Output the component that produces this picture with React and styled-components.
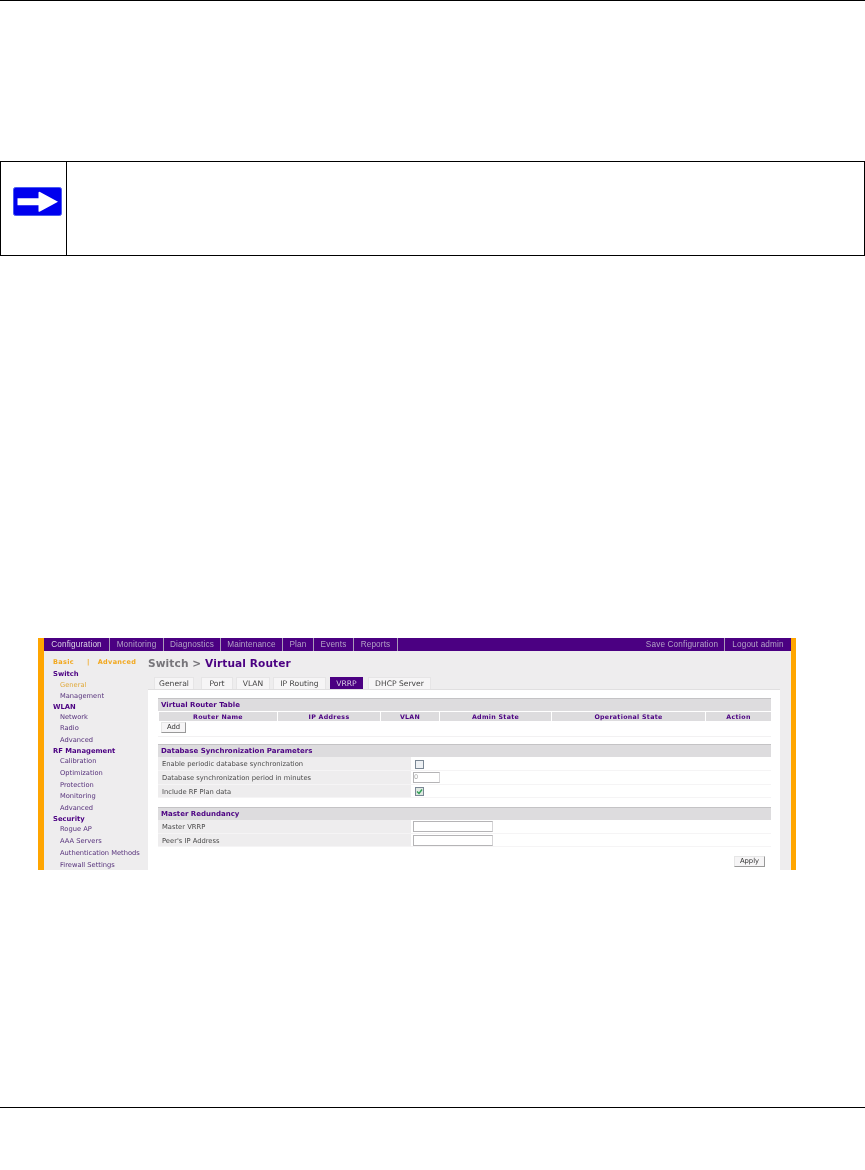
import styled, { createGlobalStyle } from 'styled-components';

const PURPLE = '#4b0082';
const GLOBAL_FONT = '"DejaVu Sans", Verdana, sans-serif';

const Global = createGlobalStyle`
  html, body { margin: 0; padding: 0; background: #fff; }
  body { font-family: ${GLOBAL_FONT}; }
`;

const Page = styled.div`
  width: 865px;
  height: 1170px;
  overflow: hidden;
  display: flex;
  flex-direction: column;
`;

const Rule = styled.div`
  height: 1px;
  background: #000;
  flex: none;
  margin-top: ${({ $mt }) => $mt || 0}px;
`;

const NoteBox = styled.div`
  margin-top: 160px;
  height: 95px;
  box-sizing: border-box;
  border: 1px solid #000;
  display: flex;
  flex: none;
`;

const NoteIcon = styled.div`
  width: 53px;
  border-right: 1px solid #000;
  display: flex;
  padding: 25px 0 0 12px;
`;

const Shot = styled.div`
  margin: 382px 0 0 38px;
  width: 758px;
  height: 232px;
  flex: none;
  box-sizing: border-box;
  border-left: 6px solid #ffa500;
  border-right: 5px solid #ffa500;
  background: #eeedee;
  overflow: hidden;
  font-size: 7.5px;
  display: flex;
  flex-direction: column;
  filter: blur(0.4px);
`;

const Nav = styled.div`
  height: 13px;
  flex: none;
  background: ${PURPLE};
  display: flex;
`;

const NavItem = styled.div`
  width: ${({ $w }) => $w}px;
  flex: none;
  box-sizing: border-box;
  border-right: ${({ $last }) => ($last ? 'none' : '1px solid #a99bb8')};
  color: ${({ $active }) => ($active ? '#dcd4e6' : '#b3a2c6')};
  font-family: "Liberation Sans", Arial, sans-serif;
  font-size: 8.2px;
  letter-spacing: 0.15px;
  line-height: 13px;
  text-align: center;
  white-space: nowrap;
`;

const NavGap = styled.div`
  flex: 1;
`;

const Body = styled.div`
  flex: 1;
  display: flex;
  min-height: 0;
`;

const Side = styled.div`
  width: 104px;
  flex: none;
  padding: 5px 0 0 9px;
  box-sizing: border-box;
`;

const BasicRow = styled.div`
  color: #f2a81f;
  font-weight: bold;
  font-size: 6.5px;
  letter-spacing: 0.35px;
  height: 13px;
  line-height: 12px;
  white-space: pre;
`;

const SideHead = styled.div`
  height: ${({ $h }) => $h}px;
  line-height: ${({ $h }) => $h}px;
  color: ${PURPLE};
  font-weight: bold;
  font-size: 6.8px;
  white-space: nowrap;
`;

const SideLink = styled.div`
  height: ${({ $h }) => $h}px;
  line-height: ${({ $h }) => $h}px;
  padding-left: 7px;
  color: ${({ $active }) => ($active ? '#e0a93a' : '#55307a')};
  font-size: 6.7px;
  white-space: nowrap;
`;

const Main = styled.div`
  flex: 1;
  min-width: 0;
  display: flex;
  flex-direction: column;
`;

const Title = styled.div`
  height: 26px;
  padding-top: 5px;
  box-sizing: border-box;
  font-weight: bold;
  font-size: 10.6px;
  line-height: 14px;
  letter-spacing: 0.1px;
  color: #77757a;
  white-space: nowrap;
  span { color: ${PURPLE}; }
`;

const Tabs = styled.div`
  display: flex;
  height: 12px;
  flex: none;
  padding-left: 6px;
`;

const Tab = styled.div`
  flex: none;
  width: ${({ $w }) => $w}px;
  margin-right: ${({ $gap }) => $gap}px;
  box-sizing: border-box;
  background: ${({ $active }) => ($active ? PURPLE : '#f6f5f6')};
  color: ${({ $active }) => ($active ? '#d8cce4' : '#444')};
  border: 1px solid ${({ $active }) => ($active ? PURPLE : '#e6e5e6')};
  border-bottom: none;
  font-size: 7.6px;
  line-height: 11px;
  text-align: center;
  white-space: nowrap;
`;

const Panel = styled.div`
  width: 632px;
  flex: 1;
  box-sizing: border-box;
  background: #fff;
  border-top: 1px solid #e0dfe0;
  padding: 8px 9px 0 10px;
`;

const SectionHead = styled.div`
  height: 13px;
  box-sizing: border-box;
  background: #dddcde;
  border-top: 1px solid #c4c3c5;
  padding-left: 3px;
  color: ${PURPLE};
  font-weight: bold;
  font-size: 7px;
  line-height: 13px;
  margin-top: ${({ $mt }) => $mt || 0}px;
  white-space: nowrap;
`;

const ColRow = styled.div`
  display: flex;
  height: 9px;
  margin-top: 1px;
  gap: 1px;
  padding-left: 1px;
`;

const Col = styled.div`
  width: ${({ $w }) => $w}px;
  flex: none;
  background: #dddcde;
  color: ${PURPLE};
  font-weight: bold;
  font-size: 6.3px;
  letter-spacing: 0.3px;
  line-height: 9px;
  text-align: center;
  white-space: nowrap;
`;

const Btn = styled.div`
  width: ${({ $w }) => $w}px;
  height: 11px;
  box-sizing: border-box;
  background: #f6f5f6;
  border-right: 1px solid #999;
  border-bottom: 1px solid #999;
  border-left: 1px solid #e6e6e6;
  border-top: 1px solid #e6e6e6;
  font-size: 6.8px;
  line-height: 9px;
  text-align: center;
  color: #333;
`;

const AddRow = styled.div`
  padding: 1px 0 3px 3px;
  border-bottom: 1px solid #f2f1f2;
  height: 11px;
  margin-bottom: 7px;
`;

const FormRow = styled.div`
  display: flex;
  height: ${({ $h }) => $h}px;
  border-bottom: 1px solid #f5f4f5;
  box-sizing: border-box;
`;

const Label = styled.div`
  width: 253px;
  flex: none;
  box-sizing: border-box;
  background: #eeedee;
  padding-left: 4px;
  color: #4a4a4a;
  font-size: 6.75px;
  line-height: ${({ $h }) => $h + 1}px;
  white-space: nowrap;
`;

const Field = styled.div`
  flex: 1;
  display: flex;
  align-items: center;
  padding-left: 2px;
`;

const Box = styled.div`
  width: 9px;
  height: 9px;
  margin: 1px 0 0 2px;
  box-sizing: border-box;
  border: 1px solid #7a8794;
  background: ${({ $on }) => ($on ? '#dfe9e2' : '#eef1f4')};
  display: flex;
`;

const Input = styled.div`
  width: ${({ $w }) => $w}px;
  height: 11px;
  box-sizing: border-box;
  border: 1px solid #b5b4b6;
  border-right-color: #d5d4d6;
  background: #fff;
  color: #aaa;
  font-size: 6.5px;
  line-height: 9px;
`;

const ApplyRow = styled.div`
  display: flex;
  justify-content: flex-end;
  padding: 9px 6px 0 0;
`;

const navLeft = [
  ['Configuration', 66, true],
  ['Monitoring', 54],
  ['Diagnostics', 57],
  ['Maintenance', 62],
  ['Plan', 31],
  ['Events', 40],
  ['Reports', 44],
];

const sideItems = [
  ['h', 'Switch', 11],
  ['l', 'General', 10, true],
  ['l', 'Management', 12],
  ['h', 'WLAN', 10],
  ['l', 'Network', 10],
  ['l', 'Radio', 13],
  ['l', 'Advanced', 11],
  ['h', 'RF Management', 10],
  ['l', 'Calibration', 11],
  ['l', 'Optimization', 12],
  ['l', 'Protection', 12],
  ['l', 'Monitoring', 11],
  ['l', 'Advanced', 13],
  ['h', 'Security', 9],
  ['l', 'Rogue AP', 11],
  ['l', 'AAA Servers', 13],
  ['l', 'Authentication Methods', 10],
  ['l', 'Firewall Settings', 14],
];

const tabs = [
  ['General', 40, 7],
  ['Port', 32, 3],
  ['VLAN', 34, 3],
  ['IP Routing', 53, 4],
  ['VRRP', 33, 5, true],
  ['DHCP Server', 63, 0],
];

const cols = [
  ['Router Name', 118],
  ['IP Address', 102],
  ['VLAN', 58],
  ['Admin State', 111],
  ['Operational State', 153],
  ['Action', 65],
];

const NoteArrow = () => (
  <svg width="49" height="29" viewBox="0 0 49 29">
    <rect x="0.5" y="0.5" width="48" height="28" rx="2" fill="#0000ee" stroke="#4a5cf2" />
    <path d="M4.5 11.3 H25.5 V5.7 Q25.5 4.4 27 5 L45 14.8 L27 24.6 Q25.5 25.2 25.5 23.9 V18.3 H4.5 Z" fill="#fff" />
  </svg>
);

const Check = () => (
  <svg width="7" height="7" viewBox="0 0 7 7">
    <path d="M1 3.5 L3 5.5 L6 1.5" fill="none" stroke="#2f9e55" strokeWidth="1.4" />
  </svg>
);

const App = () => (
  <Page>
    <Global />
    <Rule />
    <NoteBox>
      <NoteIcon>
        <NoteArrow />
      </NoteIcon>
    </NoteBox>
    <Shot>
      <Nav>
        {navLeft.map(([text, w, active]) => (
          <NavItem key={text} $w={w} $active={active}>{text}</NavItem>
        ))}
        <NavGap />
        <NavItem $w={85}>Save Configuration</NavItem>
        <NavItem $w={66} $last>Logout admin</NavItem>
      </Nav>
      <Body>
        <Side>
          <BasicRow>{'Basic     |   Advanced'}</BasicRow>
          {sideItems.map(([kind, text, h, active], i) =>
            kind === 'h' ? (
              <SideHead key={i} $h={h}>{text}</SideHead>
            ) : (
              <SideLink key={i} $h={h} $active={active}>{text}</SideLink>
            ),
          )}
        </Side>
        <Main>
          <Title>Switch &gt; <span>Virtual Router</span></Title>
          <Tabs>
            {tabs.map(([text, w, gap, active]) => (
              <Tab key={text} $w={w} $gap={gap} $active={active}>{text}</Tab>
            ))}
          </Tabs>
          <Panel>
            <SectionHead>Virtual Router Table</SectionHead>
            <ColRow>
              {cols.map(([text, w]) => (
                <Col key={text} $w={w}>{text}</Col>
              ))}
            </ColRow>
            <AddRow>
              <Btn $w={25}>Add</Btn>
            </AddRow>
            <SectionHead>Database Synchronization Parameters</SectionHead>
            <FormRow $h={14}>
              <Label $h={14}>Enable periodic database synchronization</Label>
              <Field><Box /></Field>
            </FormRow>
            <FormRow $h={14}>
              <Label $h={14}>Database synchronization period in minutes</Label>
              <Field><Input $w={27}>0</Input></Field>
            </FormRow>
            <FormRow $h={13}>
              <Label $h={13}>Include RF Plan data</Label>
              <Field><Box $on><Check /></Box></Field>
            </FormRow>
            <SectionHead $mt={9}>Master Redundancy</SectionHead>
            <FormRow $h={14}>
              <Label $h={14}>Master VRRP</Label>
              <Field><Input $w={80} /></Field>
            </FormRow>
            <FormRow $h={13}>
              <Label $h={13}>Peer's IP Address</Label>
              <Field><Input $w={80} /></Field>
            </FormRow>
            <ApplyRow>
              <Btn $w={31}>Apply</Btn>
            </ApplyRow>
          </Panel>
        </Main>
      </Body>
    </Shot>
    <Rule $mt={237} />
  </Page>
);

export default App;
